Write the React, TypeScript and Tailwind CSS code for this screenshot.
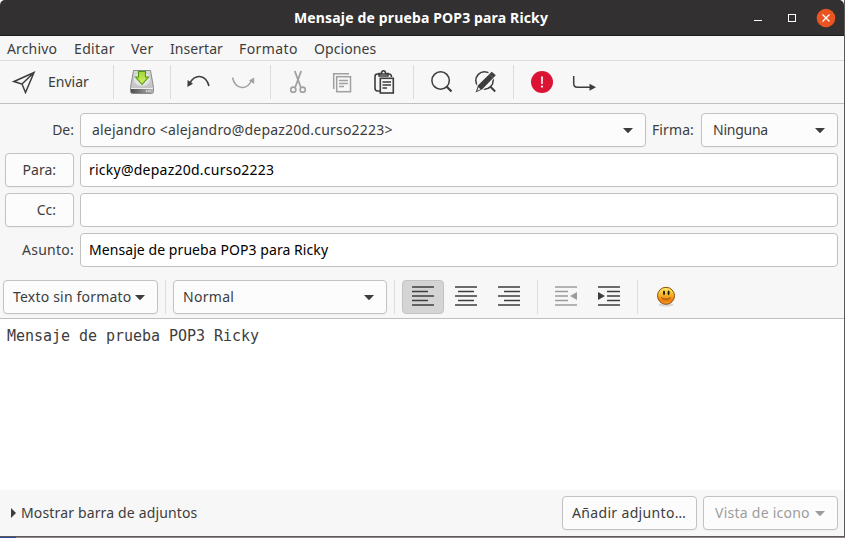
import type { ReactNode } from "react";

const menus = [
  ["Archivo", "w-[67px] tracking-[0.15px]"],
  ["Editar", "w-[57px] tracking-[0.35px]"],
  ["Ver", "w-[39px] tracking-[0.2px]"],
  ["Insertar", "w-[69px] tracking-[0.05px]"],
  ["Formato", "w-[75px] tracking-[0.4px]"],
  ["Opciones", "w-[80px] tracking-[0.1px]"],
];

const box = "flex h-[34px] items-center rounded-[4px] border border-[#c2c2c2] whitespace-nowrap";
const raised = "bg-[#fcfcfc] shadow-[0_1px_1px_rgba(0,0,0,0.04)]";

function Caret({ className = "" }: { className?: string }) {
  return (
    <svg width="10" height="5" viewBox="0 0 10 5" className={`shrink-0 ${className}`}>
      <path d="M0 0H10L5.8 4.5Q5 5.3 4.2 4.5Z" fill="currentColor" />
    </svg>
  );
}

function Sep({ className }: { className: string }) {
  return <div className={`h-[34px] w-px shrink-0 bg-[#dcdcdc] ${className}`} />;
}

function Icon({ className, children }: { className: string; children: ReactNode }) {
  return (
    <svg width="24" height="24" viewBox="0 0 24 24" fill="none" stroke="currentColor" className={`shrink-0 ${className}`}>
      {children}
    </svg>
  );
}

function Lines({ rows, children }: { rows: number[][]; children?: ReactNode }) {
  return (
    <svg width="22" height="20" viewBox="0 0 22 20" fill="currentColor" className="mb-[2px] shrink-0">
      {rows.map(([x, w], i) => (
        <rect key={i} x={x} y={[0.2, 4.8, 9.2, 13.7, 18.2][i]} width={w} height="1.5" rx="0.3" />
      ))}
      {children}
    </svg>
  );
}

function DiskIcon() {
  return (
    <svg width="26" height="26" viewBox="0 0 26 26" className="ml-[15px] shrink-0">
      <defs>
        <linearGradient id="diskTop" x1="0" y1="0" x2="0" y2="1">
          <stop offset="0" stopColor="#d9d9d9" />
          <stop offset="1" stopColor="#bdbdbd" />
        </linearGradient>
        <linearGradient id="diskFront" x1="0" y1="0" x2="1" y2="0">
          <stop offset="0" stopColor="#4d4d4d" />
          <stop offset="1" stopColor="#b4b4b4" />
        </linearGradient>
        <linearGradient id="arrowFill" x1="0" y1="0" x2="0" y2="1">
          <stop offset="0" stopColor="#a5d63c" />
          <stop offset="1" stopColor="#d3ee62" />
        </linearGradient>
      </defs>
      <path d="M4.500 1.500H21.500L24.500 18.500V22.500Q24.500 24.500 22.500 24.500H3.500Q1.500 24.500 1.500 22.500V18.500Z" fill="url(#diskTop)" stroke="#8b8b8b" />
      <ellipse cx="13" cy="10" rx="8.500" ry="7.500" fill="#e5e5e5" stroke="#c4c4c4" strokeWidth="0.8" />
      <path d="M2 20H24V22.500Q24 24 22.500 24H3.500Q2 24 2 22.500Z" fill="url(#diskFront)" />
      <path d="M2 19.500H24" stroke="#eeeeee" />
      <path d="M17 22H22" stroke="#e2e2e2" strokeWidth="1.500" strokeDasharray="1 0.7" />
      <path d="M9.500 2.500H16.500V8H19.500L13 15.500L6.500 8H9.500Z" fill="url(#arrowFill)" stroke="#4c9a0b" strokeWidth="1.1" />
    </svg>
  );
}

function SmileIcon() {
  return (
    <svg width="20" height="22" viewBox="0 0 20 22" className="ml-[18px] shrink-0">
      <defs>
        <linearGradient id="face" x1="0" y1="0" x2="0" y2="1">
          <stop offset="0" stopColor="#fff06a" />
          <stop offset="0.45" stopColor="#f8b326" />
          <stop offset="0.8" stopColor="#ee7c0c" />
          <stop offset="1" stopColor="#f9a638" />
        </linearGradient>
      </defs>
      <ellipse cx="10" cy="18.700" rx="7.500" ry="1.800" fill="#000" opacity="0.13" />
      <circle cx="10" cy="9.800" r="8.500" fill="url(#face)" stroke="#8d510a" />
      <ellipse cx="8" cy="6.800" rx="1" ry="2.400" fill="#17150f" />
      <ellipse cx="12.600" cy="6.800" rx="1" ry="2.400" fill="#17150f" />
      <path d="M5.200 11.700Q10 14.800 14.800 11.700" fill="none" stroke="#7c4305" strokeWidth="0.9" />
    </svg>
  );
}

function TitleBar() {
  return (
    <header className="flex h-9 items-center rounded-t-[5px] border-b border-[#1c1b1b] bg-[#323030] text-white">
      <h1 className="ml-[294px] w-[444px] whitespace-nowrap text-[14px] font-bold leading-5 tracking-[0.15px]">Mensaje de prueba POP3 para Ricky</h1>
      <svg width="12" height="12" className="ml-[15px]">
        <path d="M1 8.500H9" stroke="white" />
      </svg>
      <span className="ml-[23px] h-2 w-2 border border-white" />
      <svg width="20" height="20" viewBox="0 0 20 20" className="ml-5">
        <circle cx="10" cy="10" r="9.300" fill="#e95420" />
        <path d="M6.500 6.500L13.500 13.500M13.500 6.500L6.500 13.500" stroke="white" strokeWidth="1.300" />
      </svg>
    </header>
  );
}

function Toolbar() {
  return (
    <div className="flex h-[43px] items-center border-b border-[#bfbfbf]">
      <Icon className="ml-3">
        <path d="M2 11.500L22 2.500L13.500 22.500L10 14Z M22 2.500L10 14" strokeWidth="1.500" />
      </Icon>
      <span className="ml-[12px] w-[41px]">Enviar</span>
      <Sep className="ml-[24px]" />
      <DiskIcon />
      <Sep className="ml-[15px]" />
      <Icon className="ml-[16px]">
        <path d="M3 13Q6.500 6.300 12.500 6.500Q19.500 6.800 22 16" strokeWidth="1.500" />
        <path d="M0.600 10L6 13.800L0.400 17Z" fill="currentColor" stroke="none" />
      </Icon>
      <Icon className="ml-[20px] text-[#a2a2a2]">
        <path d="M1.500 7.500Q3.500 17 11 17.500Q17 18 20.500 10.500" strokeWidth="1.500" />
        <path d="M18 10.500L23.200 7.500V14Z" fill="currentColor" stroke="none" />
      </Icon>
      <Sep className="ml-[15px]" />
      <Icon className="ml-[15px] text-[#a0a0a0]">
        <path d="M8.800 1L14.700 17M15.200 1L9.300 17" strokeWidth="1.800" />
        <circle cx="7.300" cy="19.700" r="2.600" strokeWidth="1.600" />
        <circle cx="16.700" cy="19.700" r="2.600" strokeWidth="1.600" />
      </Icon>
      <Icon className="ml-[20px] text-[#a0a0a0]">
        <path d="M3.700 19V3.700H19" strokeWidth="1.500" />
        <rect x="6.700" y="6.700" width="13.800" height="15" strokeWidth="1.500" />
        <path d="M9 10.500H18M9 13.500H18M9 16.500H14" strokeWidth="1.400" />
      </Icon>
      <Icon className="ml-[18px]">
        <path d="M8.500 21H5.500Q3 21 3 18V6.500Q3 4 5.500 4H17Q19.500 4 19.500 7" strokeWidth="1.600" />
        <path d="M7 6V3.500H9.500Q9.500 0.800 11.500 0.800Q13.500 0.800 13.500 3.500H16V6Z" strokeWidth="1.500" />
        <rect x="8.300" y="8.300" width="13" height="14.700" strokeWidth="1.600" fill="#f7f7f7" />
        <path d="M10.500 12H19M10.500 15H19M10.500 18H15" strokeWidth="1.500" />
      </Icon>
      <Sep className="ml-[17px]" />
      <Icon className="ml-[16px]">
        <circle cx="10.600" cy="10.500" r="8.700" strokeWidth="1.500" />
        <path d="M16.800 16.800L21.500 21.500" strokeWidth="2.200" />
      </Icon>
      <Icon className="ml-[19px]">
        <circle cx="11.500" cy="10.500" r="8.700" strokeWidth="1.500" />
        <path d="M17.200 16.500L22.200 21.500" strokeWidth="2" />
        <path d="M1.500 24L4.300 14.200L18.500 0L23.800 5L9.500 20.300Z" fill="#f7f7f7" stroke="#f7f7f7" strokeWidth="0.800" />
        <path d="M2.600 22.400L5.100 15.300L18.700 1.700L22.800 5.300L9.300 19.300Z" fill="currentColor" stroke="none" />
        <path d="M4.300 20.800L5.500 17.300L7.500 19.200Z" fill="#f7f7f7" stroke="none" />
        <path d="M16.200 3.800L20.500 8" stroke="#888" strokeWidth="0.600" />
      </Icon>
      <Sep className="ml-[16px]" />
      <span className="ml-[17px] flex h-[22px] w-[22px] shrink-0 items-center justify-center rounded-full bg-[#db1436]">
        <svg width="4" height="14" viewBox="0 0 4 14" fill="white">
          <path d="M1.100 1.500H2.900L2.700 9H1.300Z" />
          <circle cx="2" cy="11.600" r="1.100" />
        </svg>
      </span>
      <Icon className="ml-[19px]">
        <path d="M1.700 6V13.500Q1.700 17.300 5.500 17.300H18" strokeWidth="1.500" />
        <path d="M17.500 13.800L24 17.300L17.500 20.700Z" fill="currentColor" stroke="none" />
      </Icon>
    </div>
  );
}

function Headers() {
  return (
    <section className="grid h-[154px] grid-cols-[69px_758px] content-start gap-x-[6px] gap-y-[6px] pl-[5px] pt-[9px]">
      <label className="self-center text-right">De:</label>
      <div className="flex items-center">
        <div className={`${box} ${raised} w-[566px] justify-between pl-[11px] pr-3`}>
          <span className="tracking-[0.200px]">alejandro &lt;alejandro@depaz20d.curso2223&gt;</span>
          <Caret />
        </div>
        <span className="ml-[6px] w-[49px] tracking-[0.1px]">Firma:</span>
        <div className={`${box} ${raised} w-[137px] justify-between pl-[11px] pr-3`}>
          <span className="tracking-[-0.25px]">Ninguna</span>
          <Caret />
        </div>
      </div>
      <button className={`${box} ${raised} justify-end pr-[17px]`}>Para:</button>
      <div className={`${box} bg-white pl-2 tracking-[0.24px] text-black`}>ricky@depaz20d.curso2223</div>
      <button className={`${box} ${raised} justify-end pr-[17px]`}>Cc:</button>
      <div className={`${box} bg-white`} />
      <label className="self-center text-right tracking-[0.25px]">Asunto:</label>
      <div className={`${box} bg-white pl-2 tracking-[0.07px] text-black`}>Mensaje de prueba POP3 para Ricky</div>
    </section>
  );
}

function FormatBar() {
  return (
    <div className="flex h-[61px] items-end border-b border-[#bfbfbf] pb-1 pl-[3px]">
      <button className={`${box} ${raised} w-[155px] justify-between pl-[9px] pr-3`}>
        <span className="tracking-[0.2px]">Texto sin formato</span>
        <Caret />
      </button>
      <Sep className="ml-[7px]" />
      <div className={`${box} ${raised} ml-[7px] w-[214px] justify-between pl-[9px] pr-3`}>
        <span className="tracking-[0.3px]">Normal</span>
        <Caret />
      </div>
      <Sep className="ml-[7px]" />
      <button className={`${box} ml-[7px] w-[42px] justify-center bg-[#d4d4d4]`}>
        <Lines rows={[[0, 22], [0, 16], [0, 22], [0, 16], [0, 22]]} />
      </button>
      <div className="flex h-[34px] items-center gap-[21px] pl-[11px]">
        <Lines rows={[[0, 22], [3, 16], [0, 22], [3, 16], [0, 22]]} />
        <Lines rows={[[0, 22], [6, 16], [0, 22], [6, 16], [0, 22]]} />
      </div>
      <Sep className="ml-[17px]" />
      <div className="flex h-[34px] items-center gap-[21px] pl-[17px]">
        <span className="text-[#9c9c9c]">
          <Lines rows={[[0, 22], [0, 13], [0, 13], [0, 13], [0, 22]]}>
            <path d="M22 6V14L15 10Z" />
          </Lines>
        </span>
        <Lines rows={[[0, 22], [9, 13], [9, 13], [9, 13], [0, 22]]}>
          <path d="M0 6V14L7 10Z" />
        </Lines>
      </div>
      <Sep className="ml-[17px]" />
      <div className="flex h-[34px] items-center">
        <SmileIcon />
      </div>
    </div>
  );
}

export default function App() {
  return (
    <div className="h-[538px] w-[845px] overflow-hidden bg-[#8d8586] font-['Noto_Sans','Open_Sans',sans-serif] text-[14px] leading-5 text-[#3d3d3d]">
      <div className="flex h-[537px] flex-col border-b border-r border-[#5c5959] bg-[#f7f7f7]">
        <TitleBar />
        <nav className="flex h-[25px] items-center border-b border-[#dcdcdc] pl-[7px] pt-px">
          {menus.map(([label, classes]) => (
            <span key={label} className={classes}>{label}</span>
          ))}
        </nav>
        <Toolbar />
        <Headers />
        <FormatBar />
        <main className="h-[171px] bg-white pl-[7px] pt-2 font-['DejaVu_Sans_Mono',monospace] text-[15px] leading-[18px] tracking-[-0.030px]">
          Mensaje de prueba POP3 Ricky
        </main>
        <footer className="flex h-[46px] items-center pl-[11px]">
          <svg width="5" height="10" className="mr-[5px]">
            <path d="M0 0L5 5L0 10Z" fill="currentColor" />
          </svg>
          <span className="w-[541px] tracking-[0.150px]">Mostrar barra de adjuntos</span>
          <button className={`${box} ${raised} w-[135px] pl-[9px] tracking-[0.34px]`}>Añadir adjunto…</button>
          <button className={`${box} ${raised} ml-[6px] w-[135px] justify-between pl-[11px] pr-3 text-[#9c9c9c]`}>
            <span className="tracking-[0.25px]">Vista de icono</span>
            <Caret />
          </button>
        </footer>
      </div>
      <div className="flex h-px">
        <div className="w-4 bg-[#2f4a9c]" />
      </div>
    </div>
  );
}
